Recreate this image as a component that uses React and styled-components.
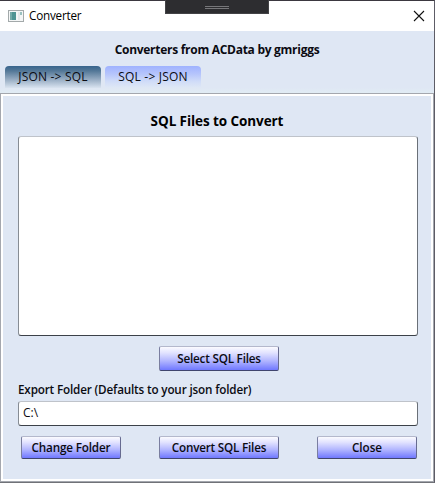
import React from 'react';
import styled, { createGlobalStyle } from 'styled-components';

const Global = createGlobalStyle`
  * { box-sizing: border-box; }
  body { margin: 0; overflow: hidden; background: #4c4c56; }
`;

const Window = styled.div`
  position: relative;
  width: 435px;
  height: 483px;
  display: flex;
  flex-direction: column;
  border-top: 1px solid #3b3840;
  border-right: 1px solid #5d5c66;
  border-bottom: 1px solid #707278;
  background: #dfe7f4;
  color: #0b0b12;
  font: 12px/16px "Open Sans", "Noto Sans", sans-serif;
`;

const Text = styled.span`
  white-space: pre;
  font-size: ${(p) => p.$size || 12}px;
  font-weight: ${(p) => p.$weight || 400};
  letter-spacing: ${(p) => p.$track || 0}px;
`;

const TitleBar = styled.header`
  height: 30px;
  flex: none;
  display: flex;
  align-items: center;
  padding: 0 9px 0 8px;
  background: #fff;
  color: #000;
`;

const WindowTitle = styled(Text)`
  padding-bottom: 2px;
`;

const AppIcon = styled.svg`
  width: 16px;
  height: 14px;
  margin-right: 5px;
`;

const CloseGlyph = styled.svg`
  width: 12px;
  height: 12px;
  margin-left: auto;
`;

const DebugHandle = styled.div`
  position: absolute;
  top: -1px;
  left: 165px;
  width: 104px;
  height: 14px;
  padding-top: 6px;
  display: flex;
  justify-content: center;
  background: #2d2d30;
  border: 1px solid #434346;
  border-top: 0;
`;

const Grip = styled.div`
  width: 24px;
  height: 3px;
  border: solid #77777a;
  border-width: 1px 0;
`;

const Heading = styled.div`
  height: 35px;
  flex: none;
  display: flex;
  justify-content: center;
  padding-top: 11px;
`;

const Tabs = styled.nav`
  height: 27px;
  flex: none;
  display: flex;
  gap: 4px;
  padding-left: 5px;
  background: linear-gradient(#dfe7f4 80%, #e1ecf4);
`;

const Tab = styled.div`
  width: 96px;
  height: 22px;
  display: flex;
  align-items: center;
  justify-content: center;
  border-radius: 4px 4px 0 0;
  background: ${(p) =>
    p.$active
      ? 'linear-gradient(#37648d, #537797 22%, #9db1c7 65%, #d9e3f0)'
      : 'linear-gradient(#9fb2ff, #b5c4fc 35%, #d0dcf8 70%, #dfe8f5)'};
`;

const Panel = styled.main`
  flex: 1;
  display: flex;
  flex-direction: column;
  border: 1px solid #a4a7ae;
  padding: 2px;
  background: #fff;
`;

const Content = styled.div`
  flex: 1;
  display: flex;
  flex-direction: column;
  padding: 0 13px 0 15px;
  background: #dfe7f4;
`;

const SectionTitle = styled.div`
  height: 40px;
  display: flex;
  justify-content: center;
  padding: 17px 2px 0 0;
  color: #000;
`;

const FieldBox = styled.div`
  height: ${(p) => p.$height}px;
  flex: none;
  display: flex;
  align-items: center;
  padding: 0 4px 2px;
  background: #fff;
  border: 1px solid;
  border-color: #bfc3ca #6a7078 #3c4148 #868c94;
  border-radius: 3px;
`;

const Button = styled.button`
  width: ${(p) => p.$width}px;
  height: ${(p) => p.$height || 23}px;
  display: flex;
  align-items: center;
  justify-content: center;
  padding: 0 0 2px;
  font: inherit;
  color: inherit;
  border: 1px solid;
  border-color: #b4b8cc #676b90 #40456e #7a7ea0;
  border-radius: 2px;
  background: linear-gradient(#fbfbff, #e2e3ff 25%, #b2b6ff 60%, #7078ff);
`;

const SelectRow = styled.div`
  display: flex;
  justify-content: center;
  padding: 10px 0 0 2px;
`;

const FieldLabel = styled.div`
  height: 30px;
  padding-top: 10px;
`;

const Actions = styled.div`
  display: flex;
  justify-content: space-between;
  padding: 10px 1px 0 3px;
`;

export default function App() {
  return (
    <>
      <Global />
      <Window>
        <TitleBar>
          <AppIcon viewBox="0 0 16 14">
            <rect x=".5" y="1.5" width="15" height="11" fill="#f4f6f6" stroke="#a3a9aa" />
            <rect x="2" y="3" width="6" height="8" fill="#4f9493" />
            <rect x="2" y="3" width="2" height="8" fill="#73aaa8" />
            <path d="M11 3v8" stroke="#d5dbdc" />
            <path d="M12 3h2v3h-2z" fill="#9ac1c0" />
          </AppIcon>
          <WindowTitle $size={11.7} $track={-0.2}>Converter</WindowTitle>
          <CloseGlyph viewBox="0 0 12 12">
            <path d="M1 1l10 10M11 1L1 11" stroke="#111" strokeWidth="1.1" />
          </CloseGlyph>
        </TitleBar>
        <DebugHandle><Grip /></DebugHandle>
        <Heading>
          <Text $weight={700} $track={-0.28}>Converters from ACData by gmriggs</Text>
        </Heading>
        <Tabs>
          <Tab $active><Text $weight={500} $track={0.2}>JSON -&gt; SQL</Text></Tab>
          <Tab><Text $weight={500} $track={0.2}>SQL -&gt; JSON</Text></Tab>
        </Tabs>
        <Panel>
          <Content>
            <SectionTitle>
              <Text $size={13.5} $weight={700} $track={-0.08}>SQL Files to Convert</Text>
            </SectionTitle>
            <FieldBox $height={200} />
            <SelectRow>
              <Button $width={120} $height={25}><Text $weight={600} $size={11.7} $track={-0.2}>Select SQL Files</Text></Button>
            </SelectRow>
            <FieldLabel>
              <Text $weight={600} $size={11.7} $track={-0.16}>Export Folder (Defaults to your json folder)</Text>
            </FieldLabel>
            <FieldBox $height={25}><Text $weight={500}>C:\</Text></FieldBox>
            <Actions>
              <Button $width={100}><Text $weight={600} $size={11.7} $track={-0.16}>Change Folder</Text></Button>
              <Button $width={120}><Text $weight={600} $size={11.7} $track={-0.2}>Convert SQL Files</Text></Button>
              <Button $width={100}><Text $weight={600} $size={11.7}>Close</Text></Button>
            </Actions>
          </Content>
        </Panel>
      </Window>
    </>
  );
}
